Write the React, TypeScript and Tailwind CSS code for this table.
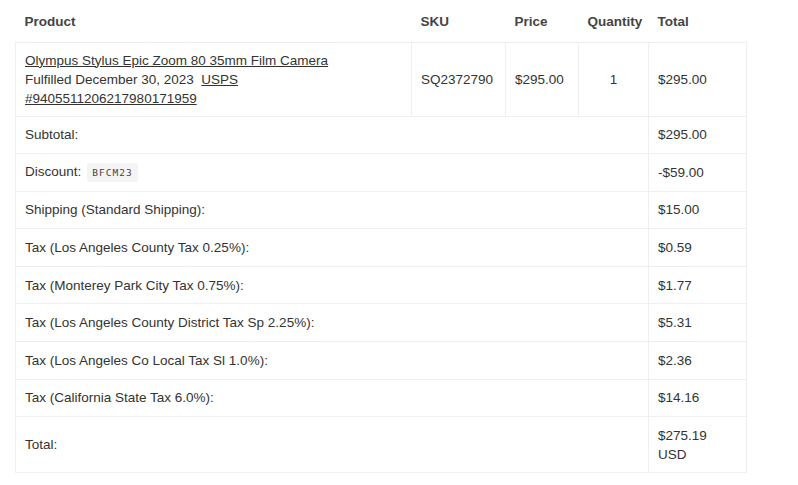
const taxes = [
  { label: "Subtotal:", value: "$295.00" },
  { label: "Discount:", value: "-$59.00", code: "BFCM23" },
  { label: "Shipping (Standard Shipping):", value: "$15.00" },
  { label: "Tax (Los Angeles County Tax 0.25%):", value: "$0.59" },
  { label: "Tax (Monterey Park City Tax 0.75%):", value: "$1.77" },
  { label: "Tax (Los Angeles County District Tax Sp 2.25%):", value: "$5.31" },
  { label: "Tax (Los Angeles Co Local Tax Sl 1.0%):", value: "$2.36" },
  { label: "Tax (California State Tax 6.0%):", value: "$14.16" },
];

export default function App() {
  const cell = "border border-[#efefef] px-[9px] py-[8px] align-middle";
  return (
    <div
      className="min-h-screen bg-white text-[#333] text-[13.5px] leading-[19px]"
      style={{ fontFamily: '"Liberation Sans", Arial, sans-serif' }}
    >
      <table className="ml-[15px] table-fixed border-collapse w-[731px]">
        <colgroup>
          <col className="w-[396px]" />
          <col className="w-[94px]" />
          <col className="w-[73px]" />
          <col className="w-[70px]" />
          <col className="w-[98px]" />
        </colgroup>
        <thead>
          <tr className="h-[42px] text-left font-bold text-[#444]">
            <th className="px-[9px] pt-[2px]">Product</th>
            <th className="px-[9px] pt-[2px]">SKU</th>
            <th className="px-[9px] pt-[2px]">Price</th>
            <th className="px-[9px] pt-[2px]">Quantity</th>
            <th className="px-[9px] pt-[2px]">Total</th>
          </tr>
        </thead>
        <tbody>
          <tr className="h-[74px]">
            <td className={cell}>
              <a className="underline">Olympus Stylus Epic Zoom 80 35mm Film Camera</a>
              <div>
                Fulfilled December 30, 2023&nbsp;&nbsp;
                <a className="underline">USPS #9405511206217980171959</a>
              </div>
            </td>
            <td className={cell}>SQ2372790</td>
            <td className={cell}>$295.00</td>
            <td className={cell + " text-center"}>1</td>
            <td className={cell}>$295.00</td>
          </tr>
          {taxes.map((t) => (
            <tr key={t.label} className="h-[37.6px]">
              <td colSpan={4} className={cell}>
                {t.label}
                {t.code && (
                  <span
                    className="ml-[6px] inline-block rounded-[3px] bg-[#f4f4f4] px-[5px] text-[9.5px] leading-[19px] tracking-[1px] text-[#444] align-middle"
                    style={{ fontFamily: '"DejaVu Sans Mono", monospace' }}
                  >
                    {t.code}
                  </span>
                )}
              </td>
              <td className={cell}>{t.value}</td>
            </tr>
          ))}
          <tr className="h-[56px]">
            <td colSpan={4} className={cell}>
              Total:
            </td>
            <td className={cell}>
              $275.19
              <br />
              USD
            </td>
          </tr>
        </tbody>
      </table>
    </div>
  );
}
